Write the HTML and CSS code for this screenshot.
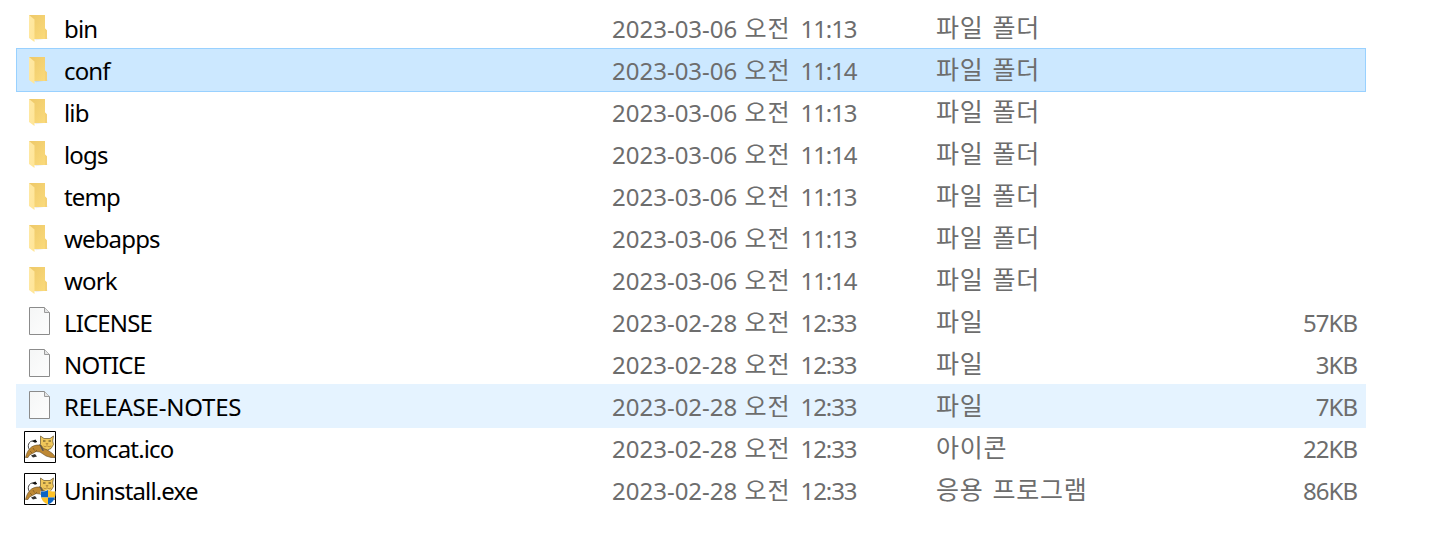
FILE: index.html
```html
<!DOCTYPE html>
<html lang="ko">
<head>
	<meta charset="UTF-8">
	<title>Tomcat</title>
	<link rel="stylesheet" href="styles.css">
</head>
<body>
	<svg class="defs" width="0" height="0">
		<defs>
			<linearGradient id="flap" x1="0" y1="0" x2="1" y2="1">
				<stop offset="0" stop-color="#ffe9a6"/>
				<stop offset="1" stop-color="#ffe596"/>
			</linearGradient>
			<linearGradient id="back" x1="0" y1="0" x2="1" y2="1">
				<stop offset="0" stop-color="#eec969"/>
				<stop offset="1" stop-color="#fbdb7c"/>
			</linearGradient>
			<linearGradient id="paper" x1="0" y1="0" x2="1" y2="1">
				<stop offset="0" stop-color="#f5f6f6"/>
				<stop offset="1" stop-color="#fdfdfd"/>
			</linearGradient>
		</defs>
		<symbol id="folder" viewBox="0 0 32 32">
			<path d="M10 28l12-1.500 3 .7-13 2z" fill="#000" opacity=".07"/>
			<path d="M5 4h16v13.500l2 2V28H10z" fill="url(#back)"/>
			<path d="M21 17.500l2 2V28h-2z" fill="#f4d176"/>
			<path d="M5 4l5.500 4.500V31L5 27z" fill="url(#flap)"/>
		</symbol>
		<symbol id="file" viewBox="0 0 32 32">
			<path d="M5.500 2.500h15l5 5v22h-20z" fill="url(#paper)" stroke="#8b8b8b"/>
			<path d="M20.500 2.500v5h5" fill="#e4e4e4" stroke="#9b9b9b"/>
		</symbol>
		<symbol id="cat" viewBox="0 0 32 32">
			<path d="M.5.500h31v31H.500z" fill="#fff" stroke="#000"/>
			<path d="M7 19.500C3 18 3.500 11 8 10l5 .5" fill="none" stroke="#333" stroke-width=".9"/>
			<path d="M8 10l3.500-1.500L13 11l-2 .8z" fill="#111"/>
			<path d="M7 24.500l4-1.500 2 2.500-4 1z" fill="#333"/>
			<path d="M1.500 26.500c1-4 2.500-8 6-10.500 3-2 7-2.500 10-1.500l6 4.500 5 3.500 2.500 3v1h-4l-5-1.500-6-4-4-.5-3.500 2-3 1.500-1.500 2.500z" fill="#be8833" stroke="#634c25" stroke-width=".6"/>
			<path d="M9 17l1.500 2.500M6 20l2 2M13 19l-2 2" fill="none" stroke="#79551f" stroke-width=".7"/>
			<path d="M15 13l2 1 3 5.500-1.500.5z" fill="#555"/>
			<path d="M16.500 5l3.500 2.500h6L29.500 5l-.8 5 .8 3.500-2.500 4-3.500 1.500-4-1.500-3-4z" fill="#efc75a" stroke="#665126" stroke-width=".7"/>
			<path d="M19 10h2.500M24.500 10H27" stroke="#4d4020"/>
			<path d="M22 12.500h2l-1 1.300zM19.500 15l1.500.8 2-1 2 1 2-.8" fill="none" stroke="#a67d35" stroke-width=".7"/>
		</symbol>
		<symbol id="shield" viewBox="0 0 16 16">
			<path d="M8 .5c2 1.500 4.500 1.800 7.500 1.700C15.700 9 14 13 8 16 2 13 .3 9 .5 2.200 3.500 2.300 6 2 8 .5z" fill="#eaf1f6"/>
			<path d="M8 1v7.500H1.200C.9 6 1 4 1 2.500 3.500 2.600 6 2.300 8 1z" fill="#0c64c4"/>
			<path d="M8 1v7.500h6.800c.3-2 .2-4.500.2-6C12.500 2.600 10 2.300 8 1z" fill="#ffc328"/>
			<path d="M8 15.500v-7H1.200C2 12 4.500 14 8 15.500z" fill="#ffc328"/>
			<path d="M8 15.500v-7h6.800C14 12 11.500 14 8 15.500z" fill="#0c64c4"/>
		</symbol>
	</svg>
	<ul class="list">
		<li class="row">
			<svg class="icon"><use href="#folder"/></svg>
			<span class="name">bin</span>
			<span class="date">2023-03-06 <i>오전</i> <b>11:13</b></span>
			<span class="type">파일 폴더</span>
		</li>
		<li class="row selected">
			<svg class="icon"><use href="#folder"/></svg>
			<span class="name">conf</span>
			<span class="date">2023-03-06 <i>오전</i> <b>11:14</b></span>
			<span class="type">파일 폴더</span>
		</li>
		<li class="row">
			<svg class="icon"><use href="#folder"/></svg>
			<span class="name">lib</span>
			<span class="date">2023-03-06 <i>오전</i> <b>11:13</b></span>
			<span class="type">파일 폴더</span>
		</li>
		<li class="row">
			<svg class="icon"><use href="#folder"/></svg>
			<span class="name">logs</span>
			<span class="date">2023-03-06 <i>오전</i> <b>11:14</b></span>
			<span class="type">파일 폴더</span>
		</li>
		<li class="row">
			<svg class="icon"><use href="#folder"/></svg>
			<span class="name">temp</span>
			<span class="date">2023-03-06 <i>오전</i> <b>11:13</b></span>
			<span class="type">파일 폴더</span>
		</li>
		<li class="row">
			<svg class="icon"><use href="#folder"/></svg>
			<span class="name">webapps</span>
			<span class="date">2023-03-06 <i>오전</i> <b>11:13</b></span>
			<span class="type">파일 폴더</span>
		</li>
		<li class="row">
			<svg class="icon"><use href="#folder"/></svg>
			<span class="name">work</span>
			<span class="date">2023-03-06 <i>오전</i> <b>11:14</b></span>
			<span class="type">파일 폴더</span>
		</li>
		<li class="row">
			<svg class="icon"><use href="#file"/></svg>
			<span class="name">LICENSE</span>
			<span class="date">2023-02-28 <i>오전</i> <b>12:33</b></span>
			<span class="type">파일</span>
			<span class="size">57KB</span>
		</li>
		<li class="row">
			<svg class="icon"><use href="#file"/></svg>
			<span class="name">NOTICE</span>
			<span class="date">2023-02-28 <i>오전</i> <b>12:33</b></span>
			<span class="type">파일</span>
			<span class="size">3KB</span>
		</li>
		<li class="row hover">
			<svg class="icon"><use href="#file"/></svg>
			<span class="name wide">RELEASE-NOTES</span>
			<span class="date">2023-02-28 <i>오전</i> <b>12:33</b></span>
			<span class="type">파일</span>
			<span class="size">7KB</span>
		</li>
		<li class="row">
			<svg class="icon"><use href="#cat"/></svg>
			<span class="name">tomcat.ico</span>
			<span class="date">2023-02-28 <i>오전</i> <b>12:33</b></span>
			<span class="type">아이콘</span>
			<span class="size">22KB</span>
		</li>
		<li class="row">
			<svg class="icon"><use href="#cat"/><use href="#shield" x="16" y="16" width="16" height="16"/></svg>
			<span class="name">Uninstall.exe</span>
			<span class="date">2023-02-28 <i>오전</i> <b>12:33</b></span>
			<span class="type">응용 프로그램</span>
			<span class="size">86KB</span>
		</li>
	</ul>
</body>
</html>
```

FILE: styles.css
```css
* {
	box-sizing: border-box;
	padding: 0;
	margin: 0;
}
body {
	font-family: "Noto Sans","Noto Sans CJK KR",sans-serif;
	font-size: 24px;
	color: #000;
	background-color: #fff;
	overflow: hidden;
}
.defs {
	display: block;
}
.list {
	width: 1350px;
	margin: 6px 0 0 16px;
	list-style: none;
}
.row {
	display: grid;
	grid-template-columns: 32px 556px 324px 300px 1fr;
	height: 44px;
	margin-bottom: -2px;
	padding: 0 7px;
	border: 1px solid transparent;
	line-height: 44px;
	white-space: nowrap;
}
.selected {
	border-color: #99d1ff;
	background-color: #cce8ff;
}
.hover {
	border-color: #e5f3ff;
	background-color: #e5f3ff;
}
.icon {
	width: 32px;
	height: 32px;
	margin-top: 4px;
}
.name {
	padding-left: 8px;
	letter-spacing: -.85px;
}
.wide {
	letter-spacing: -.2px;
}
.date, .type, .size {
	color: #6d6d6d;
}
.date i {
	margin: 0 4px 0 1px;
	font-style: normal;
	letter-spacing: .8px;
	vertical-align: 1px;
	line-height: 1;
}
.date b {
	font-weight: normal;
	letter-spacing: -1.1px;
}
.type {
	font-size: 25px;
	letter-spacing: .8px;
	word-spacing: 1.5px;
	line-height: 41px;
}
.size {
	padding-right: 1px;
	letter-spacing: -1px;
	text-align: right;
}
```
